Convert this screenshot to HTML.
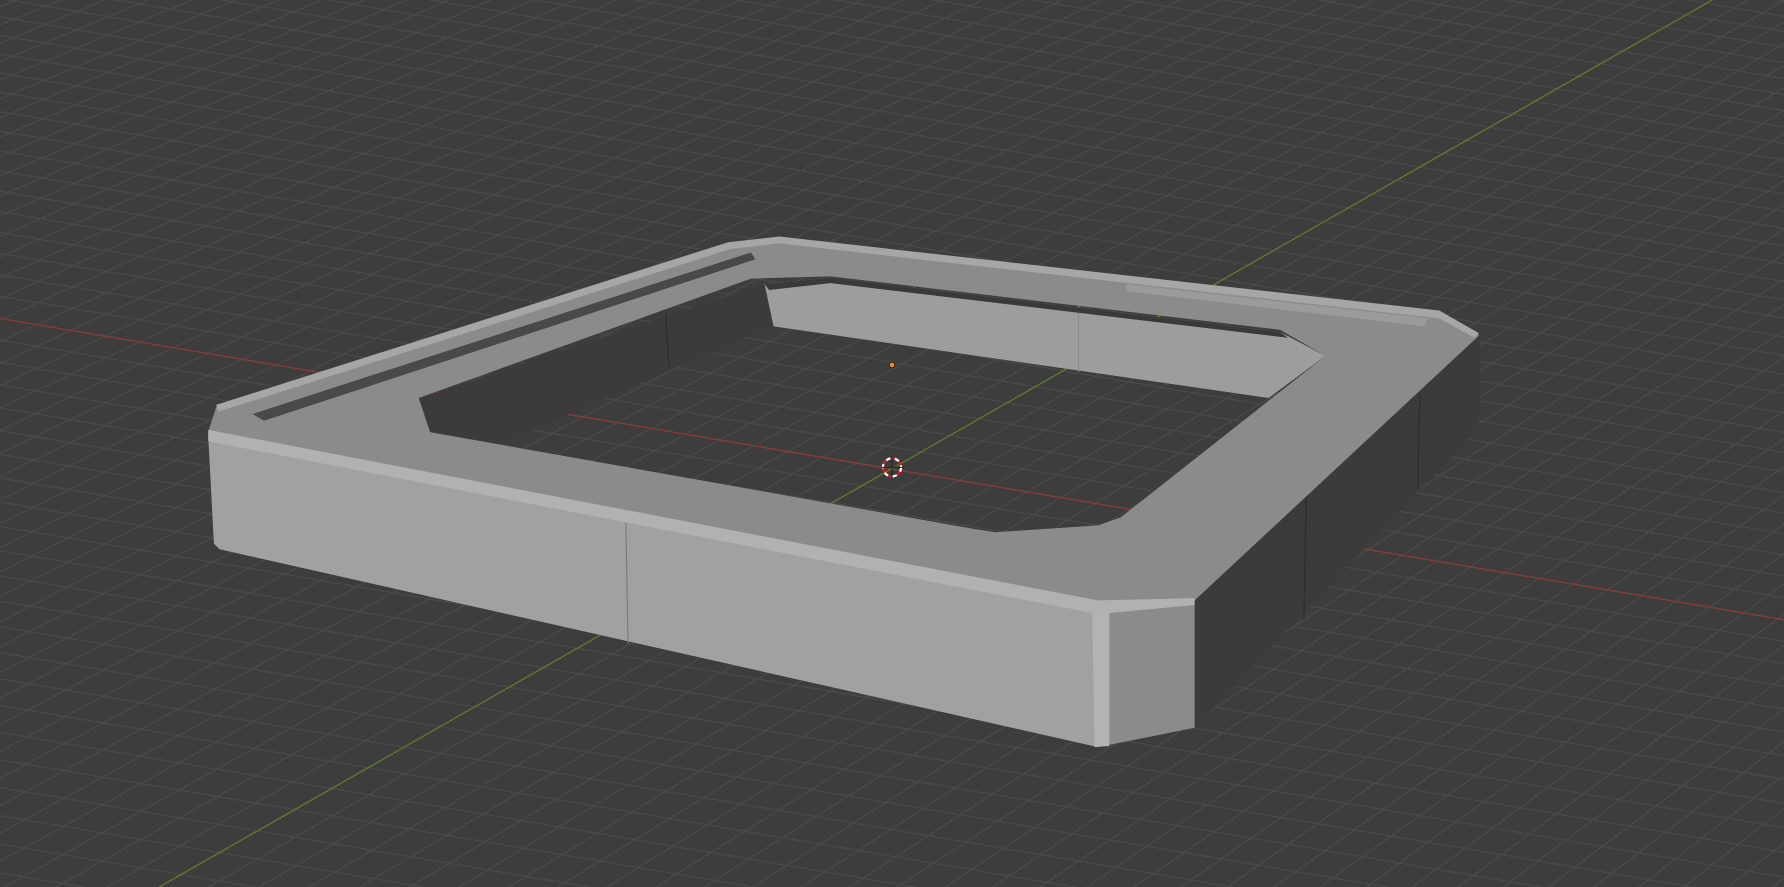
<!DOCTYPE html>
<html><head><style>
html,body{margin:0;padding:0;background:#3d3d3d;overflow:hidden;width:1784px;height:887px}
svg{display:block;overflow:hidden}
</style></head><body>
<svg width="1784" height="887" viewBox="0 0 1568 780" preserveAspectRatio="none" xmlns="http://www.w3.org/2000/svg">
<defs><clipPath id="c"><rect width="1568" height="780"/></clipPath></defs>
<rect width="1568" height="780" fill="#3d3d3d"/>
<g id="grid" stroke="#4b4b4b" stroke-width="1" clip-path="url(#c)"></g>
<line x1="0" y1="280" x2="1568" y2="545" stroke="#8a3a3a" stroke-width="1.2"/>
<line x1="140" y1="780" x2="1505" y2="0" stroke="#5e7a2c" stroke-width="1.2"/>
<polygon points="1050,528 1300,295 1300,375 1050,640" fill="#3c3a3b"/>
<line x1="1148" y1="437" x2="1146" y2="545" stroke="#2e2d2e"/>
<line x1="1248" y1="345" x2="1246" y2="430" stroke="#2e2d2e"/>
<polygon points="183,383 965,535 965,657 193,483 188,478" fill="#a0a2a1"/>
<polygon points="965,535 1050,528 1050,640 965,657" fill="#8a8b8c"/>
<polygon points="960,535 975,534 975,656 962,657" fill="#b2b4b3"/>
<line x1="550" y1="455" x2="552" y2="566" stroke="#7a7c7b"/>
<polygon points="370,350 672,250 678,287 435,392 410,388 378,380" fill="#3c3a3b"/>
<line x1="585" y1="275" x2="588" y2="322" stroke="#2e2d2e"/>
<polygon points="672,250 730,244 1125,292 1165,313 1115,350 680,287" fill="#9c9e9d"/>
<line x1="948" y1="265" x2="948" y2="327" stroke="#888a89"/>
<polygon points="672,250 730,244 1125,292 1132,297 730,249 676,255" fill="#3a393a"/>
<path fill-rule="evenodd" fill="#8a8b8b" d="M183,380 L190,358 L640,215 L685,210 L1265,275 L1300,295 L1050,528 L965,530 Z M368,350 L660,245 L730,243 L1125,290 L1165,313 L985,455 L965,462 L875,468 L855,465 L378,380 Z"/>
<polygon points="183,378 965,528 1050,526 1050,532 965,540 183,388" fill="#b0b2b1"/>
<polygon points="190,356 640,213 685,208 1265,273 1300,293 1296,297 1265,280 685,214 642,219 192,362" fill="#a5a7a6"/>
<polygon points="222,364 660,222 664,228 232,370" fill="#4a494a"/>
<polygon points="990,250 1255,280 1252,287 990,256" fill="#9a9b9b"/>
<circle cx="784" cy="321" r="2.5" fill="#f08a1e" stroke="#000" stroke-width="0.6"/>
<circle cx="784" cy="411" r="8" fill="none" stroke="#fff" stroke-width="2" stroke-dasharray="4 4"/>
<circle cx="784" cy="411" r="8" fill="none" stroke="#d02020" stroke-width="2" stroke-dasharray="4 4" stroke-dashoffset="4"/>
<line x1="774" y1="411" x2="794" y2="411" stroke="#222" stroke-width="0.8"/>
<line x1="784" y1="401" x2="784" y2="421" stroke="#222" stroke-width="0.8"/>
</svg>
<script>
(function(){
var g=document.getElementById('grid');var ns='http://www.w3.org/2000/svg';
var ox=783,oy=412;
function P(u,v){
 var s=1/(1+ v*0.006);
 var x=ox+(u*30+v*26)*s, y=oy+(u*30*0.169+v*26*-0.5714)*s;
 return [x,y];}
function L(a,b){var l=document.createElementNS(ns,'line');l.setAttribute('x1',a[0]);l.setAttribute('y1',a[1]);l.setAttribute('x2',b[0]);l.setAttribute('y2',b[1]);g.appendChild(l);}
for(var i=-150;i<=150;i++){if(i)L(P(i,-35),P(i,140));}
for(var j=-35;j<=140;j++){if(j)L(P(-150,j),P(150,j));}
})();
</script>
</body></html>
